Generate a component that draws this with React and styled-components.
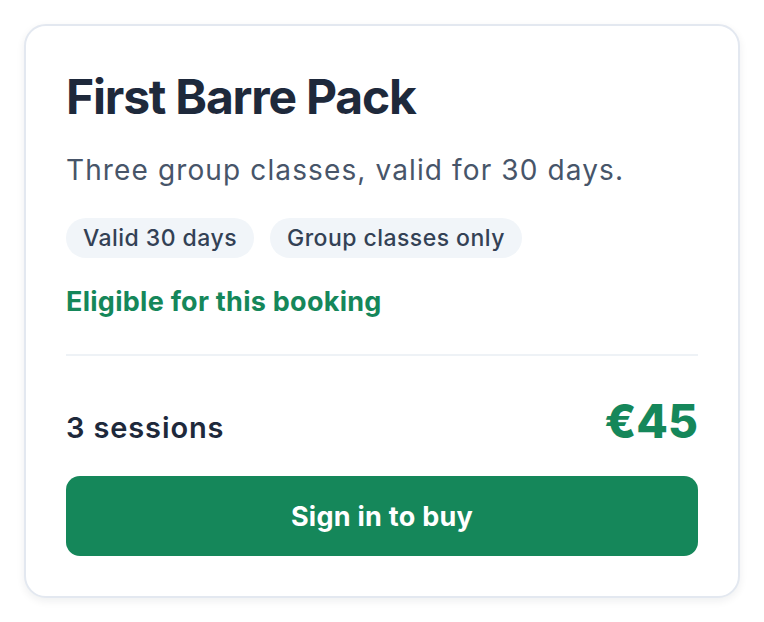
import React from 'react'
import styled, { createGlobalStyle } from 'styled-components'

const GlobalStyle = createGlobalStyle`
  html, body {
    margin: 0;
    background: #fff;
    font-family: Inter, "Noto Sans", "Liberation Sans", sans-serif;
    -webkit-font-smoothing: antialiased;
  }
`

const Page = styled.div`
  padding: 24px;
`

const Card = styled.div`
  width: 716px;
  box-sizing: border-box;
  border: 2px solid #e3e8f0;
  border-radius: 22px;
  background: #fff;
  box-shadow: 0 3px 8px rgba(15, 23, 42, 0.07);
  padding: 42px 40px 40px;
  display: flex;
  flex-direction: column;
`

const Title = styled.h2`
  margin: 0;
  font-size: 48px;
  line-height: 58px;
  font-weight: 700;
  letter-spacing: -0.025em;
  color: #1e293b;
`

const Description = styled.p`
  margin: 27px 0 0;
  font-size: 28px;
  line-height: 34px;
  font-weight: 400;
  letter-spacing: 0.04em;
  color: #475569;
`

const Chips = styled.div`
  display: flex;
  gap: 16px;
  margin-top: 31px;
`

const Chip = styled.span`
  height: 40px;
  line-height: 40px;
  padding: 0 17px;
  border-radius: 999px;
  background: #f1f5f9;
  color: #334155;
  font-size: 23px;
  font-weight: 500;
  letter-spacing: 0.02em;
`

const Eligible = styled.div`
  margin-top: 28px;
  font-size: 27px;
  line-height: 32px;
  font-weight: 700;
  letter-spacing: 0.01em;
  color: #15875a;
`

const Divider = styled.hr`
  margin: 36px 0 0;
  border: 0;
  height: 2px;
  background: #eef2f6;
`

const Footer = styled.div`
  display: flex;
  justify-content: space-between;
  align-items: baseline;
  margin-top: 38px;
`

const Sessions = styled.span`
  font-size: 29px;
  line-height: 34px;
  font-weight: 600;
  letter-spacing: 0.03em;
  color: #1e293b;
`

const Price = styled.span`
  font-size: 46px;
  line-height: 54px;
  font-weight: 800;
  letter-spacing: 0;
  color: #15875a;
`

const BuyButton = styled.button`
  margin-top: 28px;
  height: 80px;
  border: 0;
  border-radius: 14px;
  background: #15875a;
  color: #fff;
  font-family: inherit;
  font-size: 27px;
  font-weight: 700;
  letter-spacing: 0.01em;
  cursor: pointer;
`

export default function App() {
  return (
    <>
      <GlobalStyle />
      <Page>
        <Card>
          <Title>First Barre Pack</Title>
          <Description>Three group classes, valid for 30 days.</Description>
          <Chips>
            <Chip>Valid 30 days</Chip>
            <Chip>Group classes only</Chip>
          </Chips>
          <Eligible>Eligible for this booking</Eligible>
          <Divider />
          <Footer>
            <Sessions>3 sessions</Sessions>
            <Price>€45</Price>
          </Footer>
          <BuyButton>Sign in to buy</BuyButton>
        </Card>
      </Page>
    </>
  )
}
